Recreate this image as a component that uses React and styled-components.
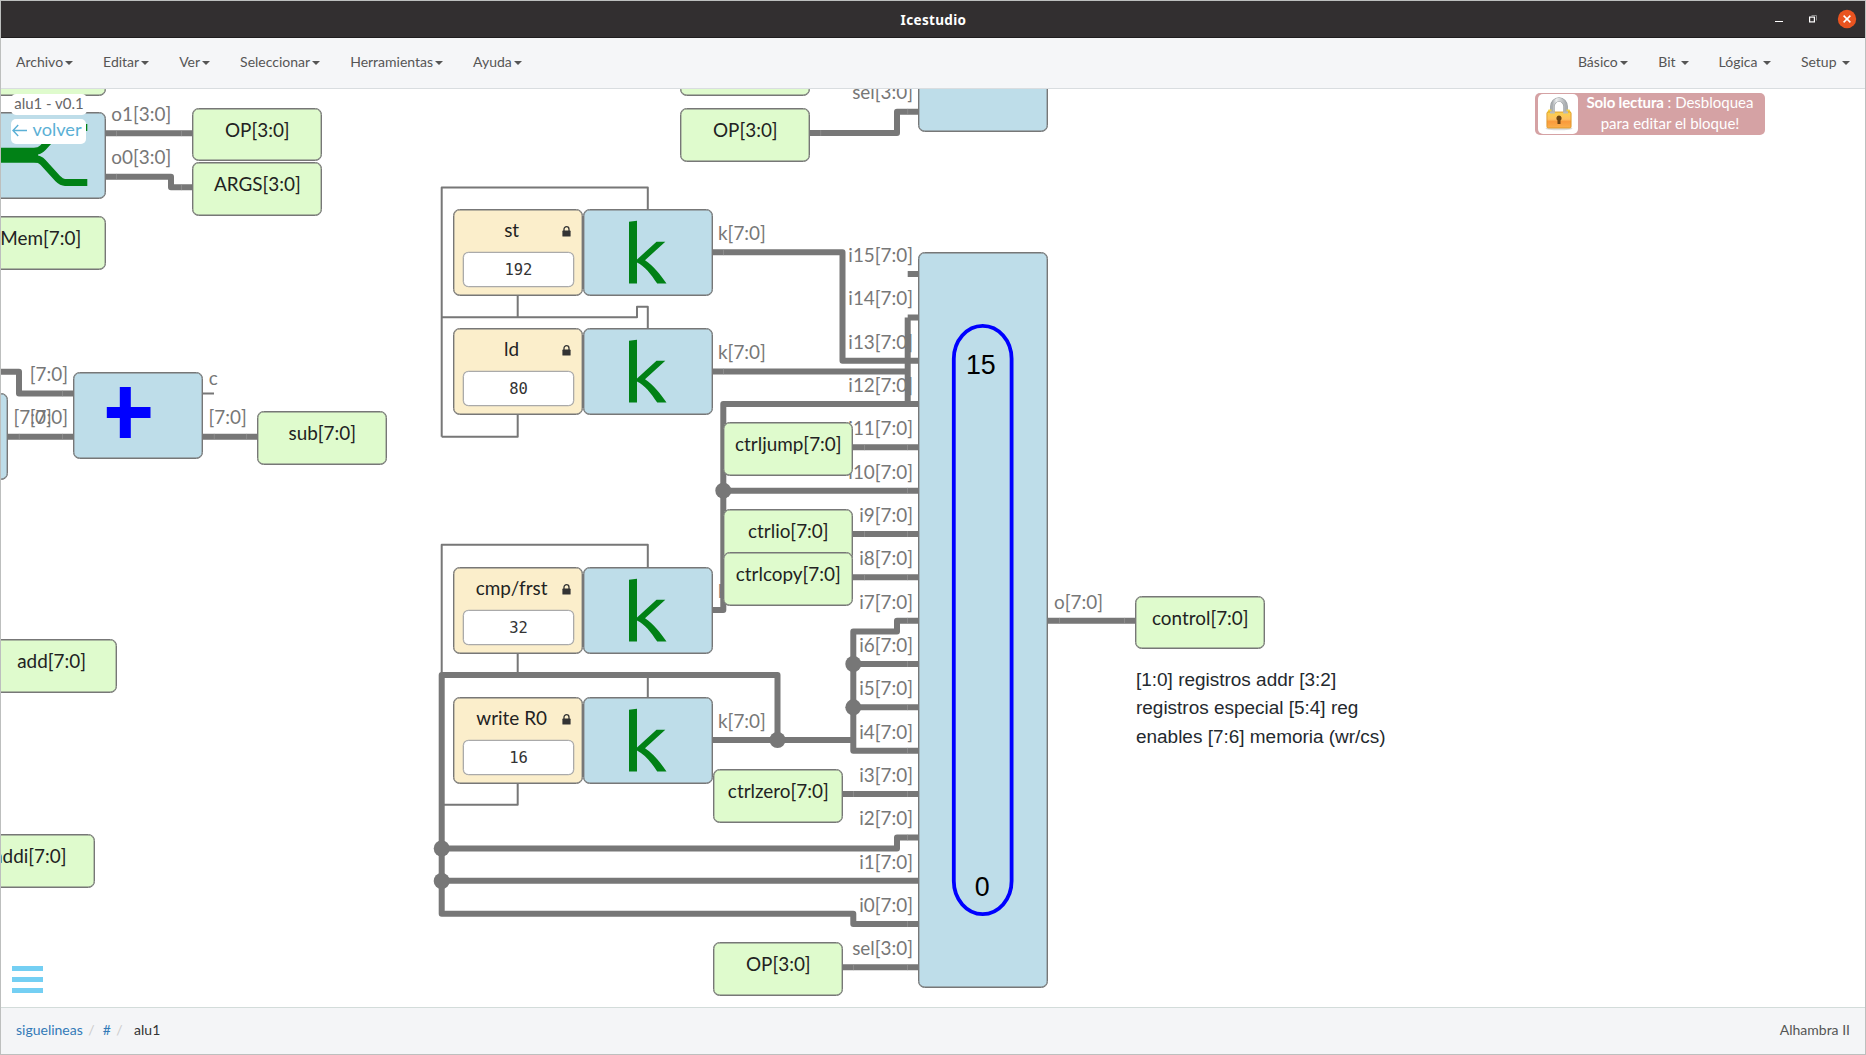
import React from "react";
import styled, { createGlobalStyle } from "styled-components";

const GlobalStyle = createGlobalStyle`
  * { box-sizing: border-box; }
  body { margin: 0; background: #fff; font-family: Lato, "Liberation Sans", sans-serif; }
`;

const Window = styled.div`
  display: flex;
  flex-direction: column;
  width: 100vw;
  height: 1055px;
  border: 1px solid #bdbfbe;
  background: #fff;
  overflow: hidden;
`;

const TitleBar = styled.header`
  display: grid;
  grid-template-columns: 1fr auto 1fr;
  align-items: center;
  flex: none;
  height: 37px;
  padding-right: 8px;
  background: #322f30;
  border-bottom: 1px solid #1f1d1e;
`;

const Title = styled.h1`
  grid-column: 2;
  margin: 0;
  padding: 1px 0 0 9px;
  color: #fff;
  font: 700 13.5px/20px "Noto Sans", sans-serif;
  letter-spacing: 0.35px;
`;

const WindowButtons = styled.div`
  display: flex;
  justify-content: flex-end;
  align-items: center;
  height: 20px;
`;

const MenuBar = styled.nav`
  display: flex;
  justify-content: space-between;
  flex: none;
  height: 51px;
  background: #f5f6f8;
  border-bottom: 1px solid #d9dde0;
`;

const MenuGroup = styled.div`
  display: flex;
`;

const MenuItem = styled.div`
  display: flex;
  align-items: center;
  gap: ${(p) => p.$gap ?? 2}px;
  padding: 0 15px 2px;
  color: #555;
  font-size: 14px;
  line-height: 20px;
`;

const Caret = styled.span`
  width: 0;
  height: 0;
  margin-top: 2px;
  border-top: 4px solid #555;
  border-left: 4px solid transparent;
  border-right: 4px solid transparent;
`;

const Canvas = styled.main`
  position: relative;
  flex: 1;
  overflow: hidden;
  background: #fff;
`;

/* The drawing plane uses window coordinates. */
const Plane = styled.div`
  position: absolute;
  left: -1px;
  top: -89px;
  width: 1866px;
  height: 1055px;
`;

const Wires = styled.svg`
  position: absolute;
  inset: 0;
  fill: none;
  stroke: #777;
  stroke-linejoin: round;
`;

const PortLabel = styled.span`
  position: absolute;
  left: ${(p) => (p.$end ? p.$x - 120 : p.$x)}px;
  top: ${(p) => p.$y - 18.6}px;
  width: 120px;
  text-align: ${(p) => (p.$end ? "right" : "left")};
  color: #777;
  font-size: 18.9px;
  line-height: 24px;
  white-space: nowrap;
`;

const Node = styled.div`
  position: absolute;
  left: ${(p) => p.$x}px;
  top: ${(p) => p.$y}px;
  width: 130px;
  height: ${(p) => p.$h ?? 86.5}px;
  border: 1px solid #777;
  border-radius: 6.5px;
  box-shadow: inset 0 0 0 0.4px #777;
  overflow: hidden;
`;

const LabelNode = styled(Node)`
  display: flex;
  justify-content: center;
  align-items: flex-start;
  padding-top: 9px;
  background: #dffbcd;
  color: #222;
  font-size: 18.9px;
  line-height: 24px;
  white-space: nowrap;
`;

const BlockNode = styled(Node)`
  background: #bedde9;
`;

const ConstNode = styled(Node)`
  display: flex;
  flex-direction: column;
  align-items: center;
  padding-top: 8px;
  background: #fbeecb;
`;

const ConstHead = styled.div`
  display: grid;
  grid-template-columns: 9px 1fr 9px;
  align-items: center;
  width: 100%;
  padding: 0 11px;

  svg { position: relative; top: 1px; }
`;

const ConstName = styled.span`
  grid-column: 2;
  padding-right: 13.5px;
  color: #222;
  font-size: 18.9px;
  line-height: 24px;
  text-align: center;
`;

const ConstValue = styled.div`
  width: 111px;
  height: 35px;
  margin-top: 9.7px;
  border: 1px solid #aaa;
  border-radius: 5.5px;
  box-shadow: 0 0 0 0.3px #aaa;
  background: #fff;
  color: #333;
  font: 15.5px/35px "DejaVu Sans Mono", monospace;
  letter-spacing: -0.1px;
  text-align: center;
`;

const Glyph = styled.svg`
  display: block;
  width: 100%;
  height: 100%;
  overflow: visible;
`;

const Note = styled.p`
  position: absolute;
  left: 1136px;
  top: 666px;
  width: 270px;
  margin: 0;
  color: #24292e;
  font: 18.97px/28.4px "Liberation Sans", sans-serif;
`;

const ModuleName = styled.div`
  position: absolute;
  left: 11px;
  top: 94px;
  width: 76px;
  height: 21px;
  border-radius: 5px;
  background: #fff;
  color: #666;
  font-size: 15px;
  line-height: 18px;
  text-align: center;
  white-space: nowrap;
`;

const BackLink = styled.div`
  position: absolute;
  left: 11px;
  top: 119px;
  display: flex;
  align-items: center;
  gap: 5.5px;
  width: 75px;
  height: 25px;
  padding: 0 0 4px 1px;
  border-radius: 5px;
  background: #fff;
  color: #5bb0d5;
  font-size: 18.2px;
  line-height: 21px;
`;

const ReadOnly = styled.div`
  position: absolute;
  left: 1535px;
  top: 93px;
  display: flex;
  width: 230px;
  height: 42px;
  padding: 1px 3px;
  border-radius: 5px;
  background: #d5a2a4;
`;

const LockBadge = styled.div`
  display: flex;
  justify-content: center;
  align-items: center;
  width: 40px;
  height: 40px;
  padding-left: 1px;
  border-radius: 5px;
  background: #fff;
`;

const ReadOnlyText = styled.div`
  flex: 1;
  margin-top: -2px;
  color: #fff;
  font-size: 15px;
  line-height: 21px;
  text-align: center;

  b { letter-spacing: -0.15px; }
`;

const Burger = styled.div`
  position: absolute;
  left: 12px;
  top: 966px;
  display: flex;
  flex-direction: column;
  justify-content: space-between;
  width: 31px;
  height: 27px;
`;

const BurgerBar = styled.span`
  height: 5px;
  background: #74cff3;
`;

const Footer = styled.footer`
  display: flex;
  justify-content: space-between;
  align-items: center;
  flex: none;
  height: 47px;
  padding: 0 15px 3px;
  background: #f4f5f7;
  border-top: 1px solid #d3dcda;
  color: #333;
  font-size: 14px;
  line-height: 20px;
`;

const Crumbs = styled.div`
  display: flex;
`;

const Crumb = styled.span`
  color: ${(p) => (p.$link ? "#337ab7" : "#333")};
  margin-left: ${(p) => p.$ml ?? 0}px;
`;

const Slash = styled.span`
  margin-left: 5.5px;
  color: #ccc;
`;

const Board = styled.span`
  color: #555;
`;

const LEFT_MENU = ["Archivo", "Editar", "Ver", "Seleccionar", "Herramientas", "Ayuda"];
const RIGHT_MENU = [["Básico", 2.5], ["Bit", 5], ["Lógica", 5.5], ["Setup", 5.5]];

const BUS_WIRES = [
  "M106 133.2H192",
  "M106 176.7H171V187.3H192",
  "M810 133H897V111.7H918",
  "M0 371.7H19V393.5H73",
  "M8 436.7H73",
  "M203 436.7H257",
  "M713 252.3H842.5V360.7H918",
  "M713 371.5H907.7M907.7 317.5V404",
  "M907.7 317.4H918M907.7 274H918",
  "M713 610H723.3V404H918",
  "M723.3 490.7H918",
  "M853 447.3H918M853 534H918M853 577.3H918",
  "M918 620.7H897V631.5H853.3V750.7H918",
  "M853.3 664H918M853.3 707.3H918",
  "M713 740H853.3",
  "M777.5 740V675H441.7V913.7H853.3V924H918",
  "M441.7 848.5H897V837.5H918",
  "M441.7 880.8H918",
  "M843 794H918M843 967.3H918",
  "M1048 620.7H1135",
];

const THIN_WIRES = [
  "M441.7 436.7V187.5H647.8V209",
  "M517.7 295V317.3M441.7 317.3H637V306.7H647.8V328",
  "M517.7 414V436.7H441.7",
  "M441.7 675V544.8H647.8V567",
  "M517.7 653V675M647.8 675V697",
  "M517.7 783V804.8H441.7",
  "M203 393.5H214",
];

const TICKS = [
  [116.5, 133.2], [181.5, 133.2], [116.5, 176.7], [181.5, 187.3],
  [820.7, 133], [907.7, 111.7], [62.5, 393.5], [62.5, 436.7], [19.3, 436.7],
  [214.3, 436.7], [246.6, 436.7], [723.5, 252.3], [723.5, 371.5],
  [864.5, 447.3], [864.5, 534], [864.5, 577.3], [853.5, 794], [853.5, 967.3],
  [907.5, 447.3], [907.5, 490.7], [907.5, 534], [907.5, 577.3], [907.5, 620.7],
  [907.5, 664], [907.5, 707.3], [907.5, 750.7], [907.5, 794], [907.5, 837.5],
  [907.5, 924], [907.5, 967.3], [1059.5, 620.7], [1124.5, 620.7],
];

const DOTS = [
  [723.3, 490.7], [853.3, 664], [853.3, 707.3], [777.5, 740], [441.7, 848.5], [441.7, 881],
];

const PORTS_RIGHT = [
  [68, 380.6, "[7:0]"],
  [68, 423.6, "[7:0]"],
  [913, 98.4, "sel[3:0]"],
  ...Array.from({ length: 16 }, (_, i) => [913, 261.7 + i * 43.32, `i${15 - i}[7:0]`]),
  [913, 261.7 + 16 * 43.32, "sel[3:0]"],
];

const PORTS_LEFT = [
  [111.3, 120.9, "o1[3:0]"],
  [111.3, 163.6, "o0[3:0]"],
  [13.5, 423.6, "[7:0]"],
  [208.8, 384.7, "c"],
  [208.5, 423.6, "[7:0]"],
  [718, 240, "k[7:0]"],
  [718, 358.6, "k[7:0]"],
  [718, 597.7, "k[7:0]"],
  [718, 727.6, "k[7:0]"],
  [1054, 608.4, "o[7:0]"],
];

const LABELS = [
  [-24.3, 42, ""],
  [192.3, 107.7, "OP[3:0]"],
  [192.3, 162, "ARGS[3:0]"],
  [-24.3, 216, "Mem[7:0]"],
  [680.3, 42, ""],
  [680.3, 108, "OP[3:0]"],
  [257.3, 411, "sub[7:0]"],
  [-13.4, 639, "add[7:0]"],
  [-35.2, 834, "addi[7:0]"],
  [723.3, 422, "ctrljump[7:0]"],
  [723.3, 508.8, "ctrlio[7:0]"],
  [723.3, 552, "ctrlcopy[7:0]"],
  [713.3, 769, "ctrlzero[7:0]"],
  [713.3, 942, "OP[3:0]"],
  [1135.3, 595.8, "control[7:0]"],
];

const CONSTANTS = [
  [209.4, "st", "192"],
  [328.4, "ld", "80"],
  [567.3, "cmp/frst", "32"],
  [697.3, "write R0", "16"],
];

const SmallLock = () => (
  <svg width="9" height="11" viewBox="0 0 9 11">
    <path d="M2 5V3.2a2.5 2.5 0 0 1 5 0V5" fill="none" stroke="#333" strokeWidth="1.3" />
    <rect x="0.4" y="4.6" width="8.2" height="6" rx="0.6" fill="#333" />
  </svg>
);

const Padlock = () => (
  <svg width="28" height="34" viewBox="0 0 28 34">
    <defs>
      <linearGradient id="body" x1="0" y1="0" x2="0" y2="1">
        <stop offset="0" stopColor="#fbd24a" />
        <stop offset="0.45" stopColor="#fdc062" />
        <stop offset="0.6" stopColor="#f99a3c" />
        <stop offset="1" stopColor="#fbb04c" />
      </linearGradient>
      <linearGradient id="shackle" x1="0" x2="1">
        <stop offset="0" stopColor="#a9adb0" />
        <stop offset="0.3" stopColor="#eceeef" />
        <stop offset="1" stopColor="#a9adb0" />
      </linearGradient>
    </defs>
    <ellipse cx="14" cy="31.4" rx="13.5" ry="1.8" fill="#ddd" />
    <path d="M7.4 16V9.5a6.6 7 0 0 1 13.2 0V16" fill="none" stroke="#9a9ea1" strokeWidth="4.6" />
    <path d="M7.4 16V9.5a6.6 7 0 0 1 13.2 0V16" fill="none" stroke="url(#shackle)" strokeWidth="3.4" />
    <path d="M3.5 12.5h3v2.5h15v-2.5h3l1.6 3.5H2z" fill="#f5d13f" />
    <rect x="1.9" y="15" width="24.2" height="16" rx="1.3" fill="url(#body)" stroke="#d99422" strokeWidth="0.8" />
    <path d="M5 14.2v2.4h4.8v-2.4M18.2 14.2v2.4H23v-2.4" fill="#b9bcbd" />
    <path d="M14 18.5a2.7 2.7 0 0 1 1.5 4.9V27h-3v-3.6A2.7 2.7 0 0 1 14 18.5z" fill="#6b4312" />
  </svg>
);

const KGlyph = () => (
  <Glyph viewBox="0 0 128 84.5">
    <path
      fill="#018116"
      d="M45 11.8L53 10.7V49.5L72.5 31.8H81.3L61 50.2C69.5 55.9 76.5 64.4 82.5 73.6H73.2C67 63.9 60.5 56.1 53 52.4V73.6H45Z"
    />
  </Glyph>
);

export default function App() {
  return (
    <>
      <GlobalStyle />
      <Window>
        <TitleBar>
          <Title>Icestudio</Title>
          <WindowButtons>
            <svg width="84" height="20" viewBox="0 0 84 20" fill="none">
              <path d="M2 12.5H10" stroke="#fff" />
              <path d="M38.5 6.5H43.5V11.5" stroke="#888" />
              <rect x="36.6" y="8.1" width="4.8" height="4.8" stroke="#fff" strokeWidth="1.2" />
              <circle cx="74" cy="10" r="9.2" fill="#e95420" />
              <path d="M70.6 6.6L77.4 13.4M77.4 6.6L70.6 13.4" stroke="#fff" strokeWidth="1.5" />
            </svg>
          </WindowButtons>
        </TitleBar>
        <MenuBar>
          <MenuGroup>
            {LEFT_MENU.map((name) => (
              <MenuItem key={name}>{name}<Caret /></MenuItem>
            ))}
          </MenuGroup>
          <MenuGroup>
            {RIGHT_MENU.map(([name, gap]) => (
              <MenuItem key={name} $gap={gap}>{name}<Caret /></MenuItem>
            ))}
          </MenuGroup>
        </MenuBar>
        <Canvas>
          <Plane>
            {PORTS_RIGHT.map(([x, y, text], i) => (
              <PortLabel key={i} $end $x={x} $y={y}>{text}</PortLabel>
            ))}
            {PORTS_LEFT.map(([x, y, text], i) => (
              <PortLabel key={i} $x={x} $y={y}>{text}</PortLabel>
            ))}
            <Wires width="1866" height="1055">
              <path d={THIN_WIRES.join("")} strokeWidth="2" />
              <path d={BUS_WIRES.join("")} strokeWidth="6" />
              <path
                d={TICKS.map(([x, y]) => `M${x} ${y - 2.9}v5.8`).join("")}
                stroke="#999"
                strokeWidth="0.6"
              />
              {DOTS.map(([x, y]) => (
                <circle key={`${x}-${y}`} cx={x} cy={y} r="8" fill="#777" stroke="none" />
              ))}
            </Wires>
            <BlockNode $x={-24.3} $y={112.3}>
              <Glyph viewBox="0 0 128 84.5">
                <path d="M0 42.3H61" stroke="#018116" strokeWidth="15" fill="none" />
                <path
                  d="M57 38.4C62 38.4 64 36.8 66 34.6L81 18.2Q84.5 14.6 88 14.6H110.3M57 45.6C62 45.6 64 47.2 66 49.4L81 65.8Q84.5 69.4 88 69.4H110.3"
                  stroke="#018116"
                  strokeWidth="7"
                  fill="none"
                />
              </Glyph>
            </BlockNode>
            <BlockNode $x={-122.3} $y={393} />
            <BlockNode $x={73.3} $y={372.3}>
              <Glyph viewBox="0 0 128 84.5">
                <rect x="32.8" y="34" width="43.7" height="11" fill="#00f" />
                <rect x="45.8" y="14" width="11" height="51" fill="#00f" />
              </Glyph>
            </BlockNode>
            <BlockNode $x={918.4} $y={42} $h={90.4} />
            <BlockNode $x={918.4} $y={252.4} $h={736}>
              <Glyph viewBox="0 0 128 734">
                <rect x="34.8" y="72.8" width="57.8" height="588.3" rx="28.9" ry="33" fill="none" stroke="#00f" strokeWidth="3.8" />
                <g fontFamily="Liberation Sans, sans-serif" fontSize="26.8" textAnchor="middle" fill="#000">
                  <text x="61.8" y="121">15</text>
                  <text x="63.2" y="642.8">0</text>
                </g>
              </Glyph>
            </BlockNode>
            {CONSTANTS.map(([y, name, value]) => (
              <React.Fragment key={name}>
                <ConstNode $x={453.4} $y={y}>
                  <ConstHead>
                    <ConstName>{name}</ConstName>
                    <SmallLock />
                  </ConstHead>
                  <ConstValue>{value}</ConstValue>
                </ConstNode>
                <BlockNode $x={583.4} $y={y}><KGlyph /></BlockNode>
              </React.Fragment>
            ))}
            {LABELS.map(([x, y, text], i) => (
              <LabelNode key={i} $x={x} $y={y} $h={53.5}>{text}</LabelNode>
            ))}
            <Note>[1:0] registros addr [3:2] registros especial [5:4] reg enables [7:6] memoria (wr/cs)</Note>
            <ModuleName>alu1 - v0.1</ModuleName>
            <BackLink>
              <svg width="15" height="14" viewBox="0 0 15 14" fill="none" stroke="#5bb0d5" strokeWidth="1.4">
                <path d="M1 7.5H15M6.2 2L1 7.5L6.2 13" />
              </svg>
              volver
            </BackLink>
            <ReadOnly>
              <LockBadge><Padlock /></LockBadge>
              <ReadOnlyText><b>Solo lectura</b> : Desbloquea<br />para editar el bloque!</ReadOnlyText>
            </ReadOnly>
            <Burger><BurgerBar /><BurgerBar /><BurgerBar /></Burger>
          </Plane>
        </Canvas>
        <Footer>
          <Crumbs>
            <Crumb $link>siguelineas</Crumb>
            <Slash>/</Slash>
            <Crumb $link $ml={8}>#</Crumb>
            <Slash>/</Slash>
            <Crumb $ml={11.5}>alu1</Crumb>
          </Crumbs>
          <Board>Alhambra II</Board>
        </Footer>
      </Window>
    </>
  );
}
